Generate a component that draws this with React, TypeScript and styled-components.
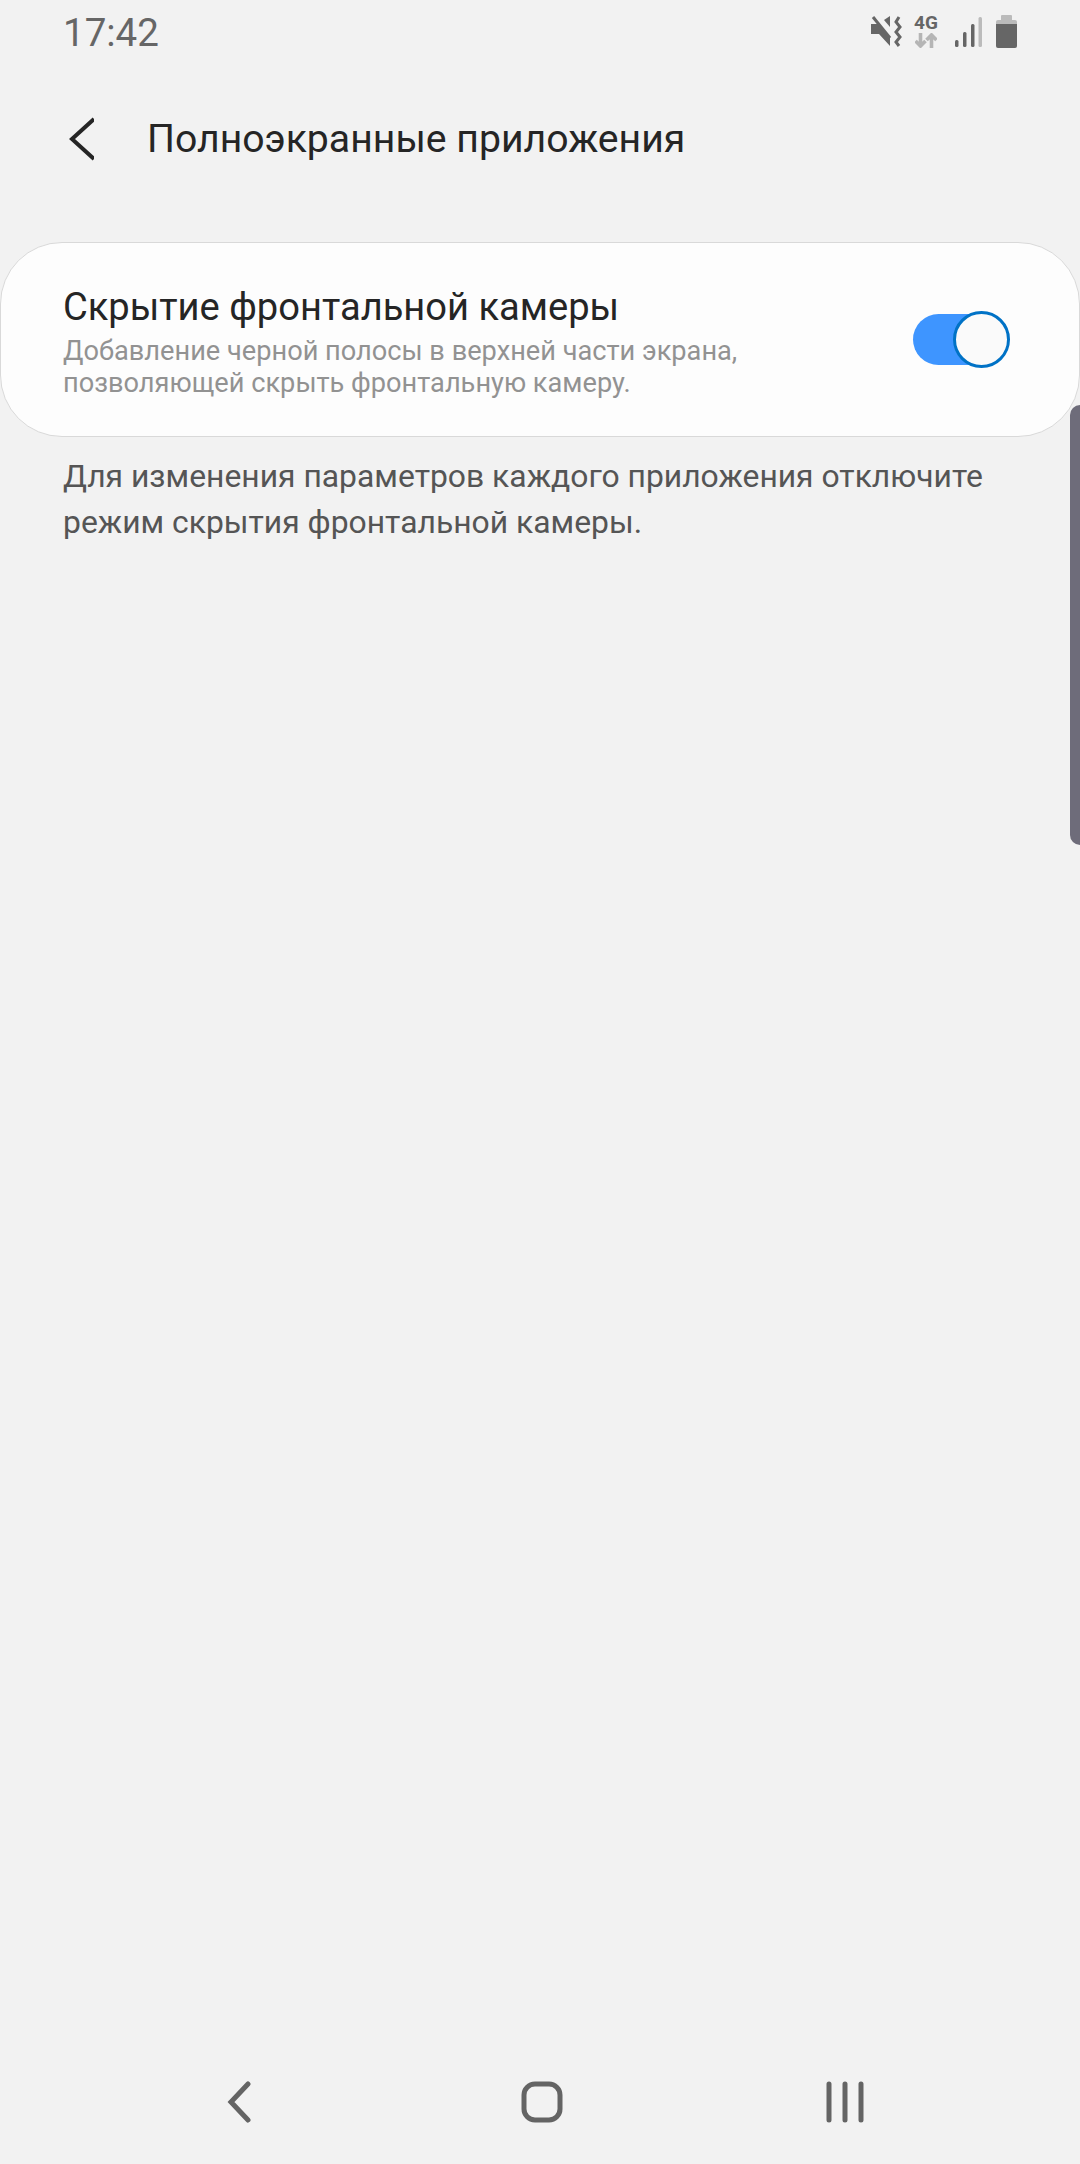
import React from "react";
import styled, { createGlobalStyle } from "styled-components";

const GlobalStyle = createGlobalStyle`
  html, body {
    margin: 0;
    padding: 0;
    background: #f2f2f2;
    font-family: Roboto, "Liberation Sans", sans-serif;
  }
`;

const Screen = styled.div`
  position: relative;
  display: flex;
  flex-direction: column;
  width: 1080px;
  height: 2164px;
  overflow: hidden;
  background: #f2f2f2;
`;

const StatusBar = styled.div`
  display: flex;
  align-items: center;
  justify-content: space-between;
  height: 66px;
  padding: 0 63px;
`;

const Time = styled.span`
  font-size: 38.5px;
  line-height: 66px;
  color: #666;
`;

const StatusIcons = styled.div`
  display: flex;
  align-items: center;
  padding-bottom: 3px;
`;

const NetworkBadge = styled.div`
  display: flex;
  flex-direction: column;
  align-items: center;
  gap: 3px;
  width: 24px;
  margin: 0 17px 0 12px;
`;

const NetworkLabel = styled.span`
  font-size: 19px;
  line-height: 15px;
  font-weight: 700;
  color: #666;
`;

const BatterySlot = styled.div`
  display: flex;
  margin-left: 14px;
`;

const Header = styled.header`
  display: flex;
  align-items: center;
  height: 74px;
  margin-top: 36px;
  padding-left: 68px;
`;

const HeaderTitle = styled.h1`
  margin: 0 0 0 53px;
  font-size: 39.2px;
  font-weight: 400;
  color: #252525;
`;

const Card = styled.section`
  display: flex;
  align-items: center;
  justify-content: space-between;
  box-sizing: border-box;
  height: 195px;
  margin-top: 66px;
  padding: 0 75px 0 62px;
  background: #fdfdfd;
  border: 1px solid #d9d9d9;
  border-radius: 62px;
`;

const CardText = styled.div`
  display: flex;
  flex-direction: column;
  padding-top: 4px;
`;

const CardTitle = styled.div`
  font-size: 38.1px;
  line-height: 46px;
  color: #252525;
`;

const CardSubtitle = styled.div`
  margin-top: 5px;
  font-size: 27.2px;
  line-height: 32px;
  color: #929292;
`;

const Toggle = styled.div`
  position: relative;
  width: 91px;
  height: 51px;
  border-radius: 26px;
  background: #3e95ff;
`;

const ToggleThumb = styled.div`
  position: absolute;
  top: -3px;
  right: -6px;
  box-sizing: border-box;
  width: 57px;
  height: 57px;
  border: 3px solid #0072c6;
  border-radius: 50%;
  background: #fafafa;
`;

const Note = styled.p`
  margin: 16px 60px 0 63px;
  font-size: 31.85px;
  line-height: 46px;
  color: #555;
`;

const Spacer = styled.div`
  flex: 1;
`;

const NavBar = styled.nav`
  display: flex;
  align-items: center;
  height: 124px;
  padding-left: 87px;
`;

const NavItem = styled.div`
  display: flex;
  align-items: center;
  justify-content: center;
  width: 303px;
`;

const ScrollThumb = styled.div`
  position: absolute;
  top: 405px;
  right: 0;
  width: 10px;
  height: 440px;
  background: #6e6c7a;
  border-radius: 10px 0 0 10px;
`;

const MuteIcon = () => (
  <svg width="32" height="31" viewBox="0 0 32 31">
    <path d="M1 8h7l12 14v8L9 18H1z" fill="#666" />
    <path d="M14 4l6-4v11z" fill="#666" />
    <path d="M3 1l17 21" stroke="#666" strokeWidth="3" />
    <path
      d="M29 1l-3 5 4 5-4 5 4 5-4 5 3 4"
      fill="none"
      stroke="#666"
      strokeWidth="3"
    />
  </svg>
);

const TransferArrows = () => (
  <svg width="22" height="15" viewBox="0 0 22 15">
    <path
      d="M5.5 0v13M0.5 8l5 5 5-5"
      fill="none"
      stroke="#b5b5b5"
      strokeWidth="3.6"
    />
    <path
      d="M16.5 15V2M11.5 7l5-5 5 5"
      fill="none"
      stroke="#b5b5b5"
      strokeWidth="3.6"
    />
  </svg>
);

const SignalIcon = () => (
  <svg width="27" height="30" viewBox="0 0 27 30">
    <rect x="0" y="23" width="3.5" height="7" rx="1.5" fill="#666" />
    <rect x="8" y="15" width="3.5" height="15" rx="1.5" fill="#666" />
    <rect x="16" y="7" width="3.5" height="23" rx="1.5" fill="#666" />
    <rect x="23.5" y="0" width="3.5" height="30" rx="1.5" fill="#bbb" />
  </svg>
);

const BatteryIcon = () => (
  <svg width="21" height="33" viewBox="0 0 21 33">
    <path d="M6 0h9a1 1 0 0 1 1 1v4H5V1a1 1 0 0 1 1-1z" fill="#bbb" />
    <path d="M2 5h17a2 2 0 0 1 2 2v2H0V7a2 2 0 0 1 2-2z" fill="#bbb" />
    <path d="M0 9h21v22a2 2 0 0 1-2 2H2a2 2 0 0 1-2-2z" fill="#666" />
  </svg>
);

const HeaderBackIcon = () => (
  <svg width="26" height="44" viewBox="0 0 26 44">
    <path
      d="M26 2L4 22l22 20"
      fill="none"
      stroke="#252525"
      strokeWidth="4"
    />
  </svg>
);

const NavBackIcon = () => (
  <svg width="24" height="42" viewBox="0 0 24 42">
    <path
      d="M21 3L4 21l17 18"
      fill="none"
      stroke="#646464"
      strokeWidth="5"
      strokeLinecap="round"
    />
  </svg>
);

const NavHomeIcon = () => (
  <svg width="42" height="42" viewBox="0 0 42 42">
    <rect
      x="3"
      y="3"
      width="36"
      height="36"
      rx="11"
      fill="none"
      stroke="#646464"
      strokeWidth="5"
    />
  </svg>
);

const NavRecentsIcon = () => (
  <svg width="38" height="42" viewBox="0 0 38 42">
    <path
      d="M3 3v36M19 3v36M35 3v36"
      fill="none"
      stroke="#646464"
      strokeWidth="5"
      strokeLinecap="round"
    />
  </svg>
);

export default function App() {
  return (
    <Screen>
      <GlobalStyle />
      <StatusBar>
        <Time>17:42</Time>
        <StatusIcons>
          <MuteIcon />
          <NetworkBadge>
            <NetworkLabel>4G</NetworkLabel>
            <TransferArrows />
          </NetworkBadge>
          <SignalIcon />
          <BatterySlot>
            <BatteryIcon />
          </BatterySlot>
        </StatusIcons>
      </StatusBar>
      <Header>
        <HeaderBackIcon />
        <HeaderTitle>Полноэкранные приложения</HeaderTitle>
      </Header>
      <Card>
        <CardText>
          <CardTitle>Скрытие фронтальной камеры</CardTitle>
          <CardSubtitle>
            Добавление черной полосы в верхней части экрана,
            <br />
            позволяющей скрыть фронтальную камеру.
          </CardSubtitle>
        </CardText>
        <Toggle>
          <ToggleThumb />
        </Toggle>
      </Card>
      <Note>
        Для изменения параметров каждого приложения отключите режим скрытия
        фронтальной камеры.
      </Note>
      <Spacer />
      <NavBar>
        <NavItem>
          <NavBackIcon />
        </NavItem>
        <NavItem>
          <NavHomeIcon />
        </NavItem>
        <NavItem>
          <NavRecentsIcon />
        </NavItem>
      </NavBar>
      <ScrollThumb />
    </Screen>
  );
}
